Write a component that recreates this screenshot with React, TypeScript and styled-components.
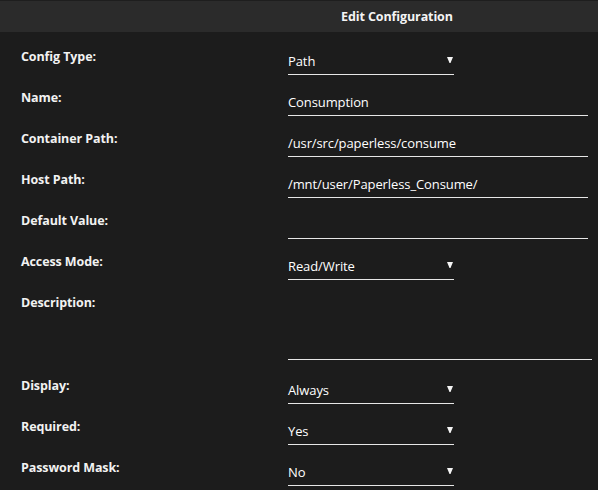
import styled, { createGlobalStyle } from "styled-components";

const GlobalStyle = createGlobalStyle`
  html, body {
    margin: 0;
    padding: 0;
    background: #1c1c1c;
  }

  body {
    font-family: "Open Sans", "Liberation Sans", sans-serif;
    color: #f2f2f2;
  }
`;

type FieldKind = "select" | "text" | "area";

interface ConfigRow {
  label: string;
  value: string;
  kind: FieldKind;
}

const rows: ConfigRow[] = [
  { label: "Config Type:", value: "Path", kind: "select" },
  { label: "Name:", value: "Consumption", kind: "text" },
  { label: "Container Path:", value: "/usr/src/paperless/consume", kind: "text" },
  { label: "Host Path:", value: "/mnt/user/Paperless_Consume/", kind: "text" },
  { label: "Default Value:", value: "", kind: "text" },
  { label: "Access Mode:", value: "Read/Write", kind: "select" },
  { label: "Description:", value: "", kind: "area" },
  { label: "Display:", value: "Always", kind: "select" },
  { label: "Required:", value: "Yes", kind: "select" },
  { label: "Password Mask:", value: "No", kind: "select" },
];

const App = () => {
  return (
    <>
      <GlobalStyle />
      <Dialog>
        <Header>
          <Title>Edit Configuration</Title>
        </Header>

        <Form>
          {rows.map((row) => (
            <Row key={row.label}>
              <Label>{row.label}</Label>
              <Field $kind={row.kind}>
                <Value>{row.value}</Value>
                {row.kind === "select" && (
                  <Arrow width="6" height="6" viewBox="0 0 6 6">
                    <polygon points="0,0 6,0 3.5,6 2.5,6" fill="#f4f4f4" />
                  </Arrow>
                )}
              </Field>
            </Row>
          ))}
        </Form>
      </Dialog>
    </>
  );
};

export default App;

const Dialog = styled.div`
  width: 598px;
  height: 490px;
  overflow: hidden;
  background: #1c1c1c;
`;

const Header = styled.div`
  height: 31px;
  border-top: 1px solid #1e1e1e;
  background: #2b2b2b;

  display: flex;
  align-items: center;
  padding-left: 341px;
`;

const Title = styled.h1`
  margin: 0;
  font-size: 12.5px;
  font-weight: 700;
  color: #f4f4f4;
  letter-spacing: -0.1px;
`;

const Form = styled.div`
  display: flex;
  flex-direction: column;
  gap: 14px;
  padding: 16px 0 0 21px;
`;

const Row = styled.div`
  display: grid;
  grid-template-columns: 267px auto;
  align-items: start;
`;

const Label = styled.div`
  padding-top: 2px;
  font-size: 12.5px;
  line-height: 14px;
  font-weight: 700;
  color: #f2f2f2;
  letter-spacing: -0.1px;
`;

const fieldWidths: Record<FieldKind, number> = {
  select: 166,
  text: 300,
  area: 304,
};

const Field = styled.div<{ $kind: FieldKind }>`
  width: ${({ $kind }) => fieldWidths[$kind]}px;
  height: ${({ $kind }) => ($kind === "area" ? 65 : 26)}px;
  margin-bottom: ${({ $kind }) => ($kind === "area" ? 3 : 0)}px;
  border-bottom: 1px solid #e6e6e6;
  box-sizing: content-box;

  display: flex;
  align-items: center;
  justify-content: space-between;
`;

const Value = styled.span`
  font-size: 13px;
  color: #ffffff;
  letter-spacing: -0.1px;
  white-space: nowrap;
`;

const Arrow = styled.svg`
  margin-right: 1px;
  margin-top: -2px;
`;
